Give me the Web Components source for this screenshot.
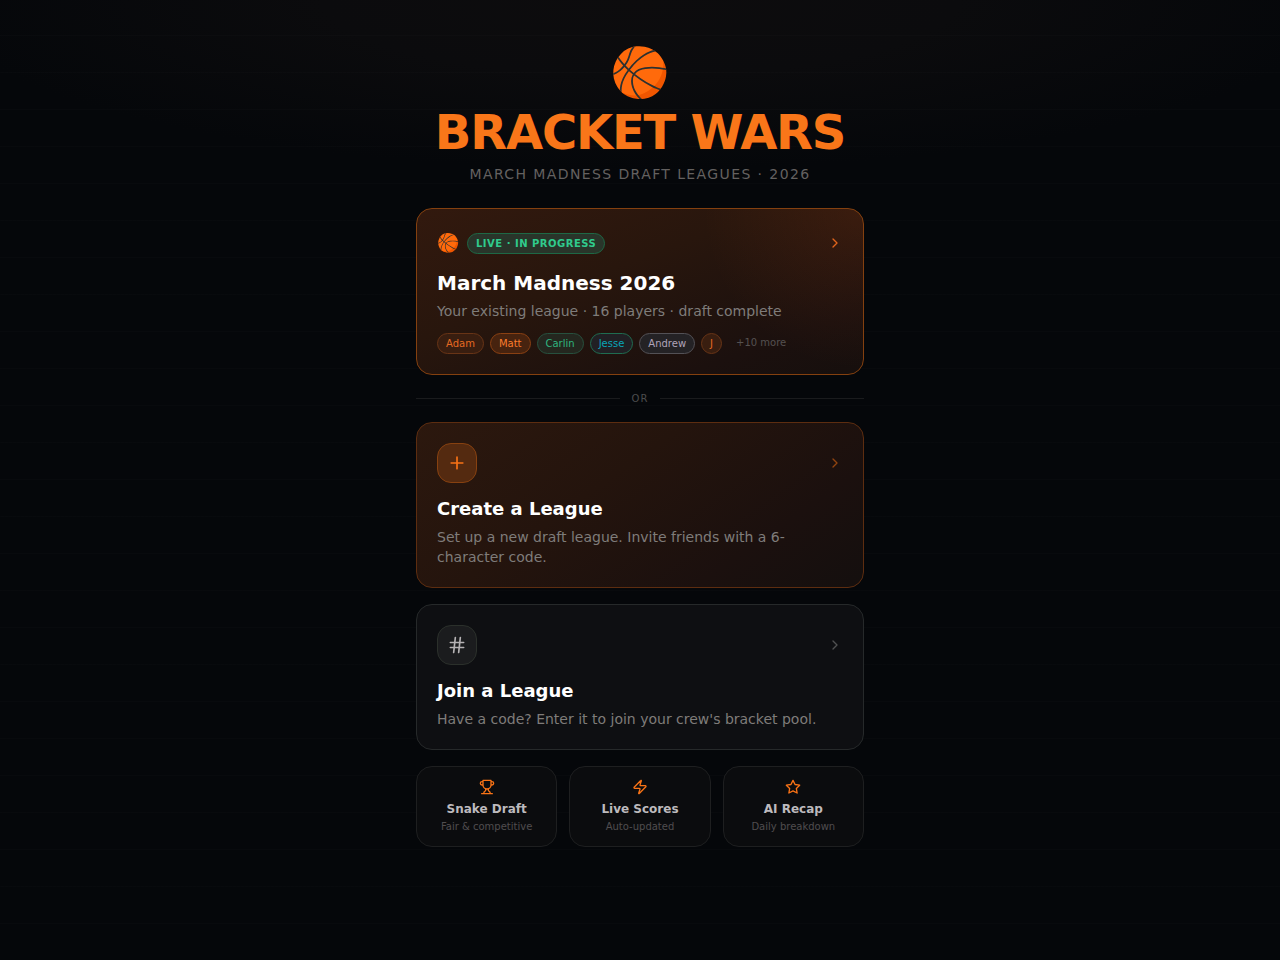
<!DOCTYPE html>
<html lang="en">
<head>
<meta charset="utf-8">
<meta name="viewport" content="width=device-width, initial-scale=1">
<title>Bracket Wars</title>
<style>
  body {
    margin: 0;
    background: #05070a;
    font-family: "DejaVu Sans", Verdana, sans-serif;
    color: #fff;
  }
</style>
</head>
<body>
<bracket-home></bracket-home>

<script>
const ICONS = {
  chevron: '<path d="m9 18 6-6-6-6"/>',
  plus: '<path d="M5 12h14M12 5v14"/>',
  hash: '<path d="M4 9h16M4 15h16M10 3 8 21M16 3l-2 18"/>',
  trophy: '<path d="M6 9H4.500a2.500 2.500 0 0 1 0-5H6M18 9h1.500a2.500 2.500 0 0 0 0-5H18M4 22h16M10 14.660V17c0 .55-.47.98-.97 1.210C7.850 18.750 7 20.240 7 22M14 14.660V17c0 .55.47.98.97 1.210C16.150 18.750 17 20.240 17 22M18 2H6v7a6 6 0 0 0 12 0V2Z"/>',
  zap: '<path d="M4 14a1 1 0 0 1-.78-1.630l9.900-10.200a.5.5 0 0 1 .86.46l-1.920 6.020A1 1 0 0 0 13 10h7a1 1 0 0 1 .78 1.630l-9.900 10.200a.5.5 0 0 1-.86-.46l1.920-6.020A1 1 0 0 0 11 14z"/>',
  star: '<path d="m12 2 3.090 6.260L22 9.270l-5 4.870 1.180 6.880L12 17.770l-6.180 3.250L7 14.140 2 9.270l6.910-1.010L12 2z"/>',
};

// <ui-icon name="zap"> - size comes from --icon-size
class UiIcon extends HTMLElement {
  connectedCallback() {
    if (!this.shadowRoot) this.attachShadow({ mode: 'open' });
    this.shadowRoot.innerHTML = `
      <style>
        :host { display: block; width: var(--icon-size, 16px); height: var(--icon-size, 16px); }
        svg { display: block; width: 100%; height: 100%; }
      </style>
      <svg viewBox="0 0 24 24" fill="none" stroke="currentColor" stroke-width="2"
        stroke-linecap="round" stroke-linejoin="round" aria-hidden="true">
        ${ICONS[this.getAttribute('name')] || ''}
      </svg>
    `;
  }
}

class PlayerChip extends HTMLElement {
  constructor() {
    super();
    this.attachShadow({ mode: 'open' });
    this.shadowRoot.innerHTML = `
      <style>
        :host {
          display: block;
          padding: 2px 8px;
          border: 1px solid #683416;
          border-radius: 999px;
          background: #391e10;
          color: #e56a22;
          font-size: 10px;
          line-height: 15px;
        }
        :host([tone="hot"]) { border-color: #8a4012; background: #47230f; color: #fb7c2c; }
        :host([tone="green"]) { border-color: #27503e; background: #24271f; color: #2fb57f; }
        :host([tone="cyan"]) { border-color: #1f6c50; background: #212024; color: #09a5b8; }
        :host([tone="violet"]) { border-color: #535156; background: #242225; color: #b0a2b9; }
        :host([tone="more"]) { border: 0; background: none; color: #555150; }
      </style>
      <slot></slot>
    `;
  }
}

class LiveBadge extends HTMLElement {
  constructor() {
    super();
    this.attachShadow({ mode: 'open' });
    this.shadowRoot.innerHTML = `
      <style>
        :host {
          display: block;
          padding: 2px 8px;
          border: 1px solid #1e6845;
          border-radius: 999px;
          background: #29352a;
          color: #30cb8d;
          font-size: 10px;
          font-weight: 700;
          line-height: 15px;
          letter-spacing: 0.05em;
        }
      </style>
      <slot></slot>
    `;
  }
}

class LeagueCard extends HTMLElement {
  constructor() {
    super();
    this.attachShadow({ mode: 'open' });
    this.shadowRoot.innerHTML = `
      <style>
        :host {
          --line: #26292a;
          --fill: #0e0f12;
          --arrow: #505152;
          --title-size: 18px;
          display: block;
        }
        :host([variant="live"]) {
          --line: #84400f;
          --fill: radial-gradient(circle at 100% 0, #ff60181a, transparent 160px),
            linear-gradient(160deg, #32190e 0%, #28160d 40%, #1b100e 80%, #160f0d 100%);
          --arrow: #e0641c;
          --title-size: 20px;
        }
        :host([variant="create"]) {
          --line: #5d2d10;
          --fill: linear-gradient(145deg, #2c180e 0%, #24140d 40%, #1b100e 75%, #140f0e 100%);
          --arrow: #91440f;
        }
        a {
          display: block;
          padding: 20px;
          border: 1px solid var(--line);
          border-radius: 16px;
          background: var(--fill) border-box;
          color: inherit;
          text-decoration: none;
        }
        .top {
          display: flex;
          align-items: center;
          justify-content: space-between;
          margin-bottom: 12px;
        }
        .lead { display: flex; align-items: center; gap: 8px; }
        ui-icon { color: var(--arrow); }
        h2 { margin: 0 0 4px; font-size: var(--title-size); line-height: 28px; }
        p { margin: 0; color: #7f7c7a; font-size: 14px; line-height: 20px; }
      </style>
      <a href="#">
        <div class="top">
          <div class="lead"><slot name="lead"></slot></div>
          <ui-icon name="chevron"></ui-icon>
        </div>
        <h2><slot name="title"></slot></h2>
        <p><slot></slot></p>
        <slot name="footer"></slot>
      </a>
    `;
  }

  connectedCallback() {
    this.shadowRoot.querySelector('a').href = this.getAttribute('href') || '#';
  }
}

class IconTile extends HTMLElement {
  connectedCallback() {
    if (!this.shadowRoot) this.attachShadow({ mode: 'open' });
    this.shadowRoot.innerHTML = `
      <style>
        :host {
          --icon-size: 20px;
          box-sizing: border-box;
          display: grid;
          place-items: center;
          width: 40px;
          height: 40px;
          border: 1px solid #2b302b;
          border-radius: 14px;
          background: #1b1c1e;
          color: #b5b2b4;
        }
        :host([tone="hot"]) { border-color: #874110; background: #542a10; color: #f97316; }
      </style>
      <ui-icon name="${this.getAttribute('icon')}"></ui-icon>
    `;
  }
}

class OrDivider extends HTMLElement {
  constructor() {
    super();
    this.attachShadow({ mode: 'open' });
    this.shadowRoot.innerHTML = `
      <style>
        :host {
          display: flex;
          align-items: center;
          gap: 12px;
          color: #4c4c4d;
          font-size: 10px;
          line-height: 15px;
          letter-spacing: 0.1em;
        }
        :host::before, :host::after {
          content: "";
          flex: 1;
          height: 1px;
          background: #1a1b1d;
        }
      </style>
      <slot></slot>
    `;
  }
}

class FeatureTile extends HTMLElement {
  connectedCallback() {
    if (!this.shadowRoot) this.attachShadow({ mode: 'open' });
    this.shadowRoot.innerHTML = `
      <style>
        :host {
          display: flex;
          flex-direction: column;
          align-items: center;
          padding: 12px;
          border: 1px solid #1e1f20;
          border-radius: 16px;
          background: #0b0c0e;
          text-align: center;
        }
        ui-icon { margin-bottom: 6px; color: #f97316; }
        h3 { margin: 0 0 2px; color: #bdbabd; font-size: 12px; line-height: 16px; }
        p { margin: 0; color: #504d4f; font-size: 10px; line-height: 15px; }
      </style>
      <ui-icon name="${this.getAttribute('icon')}"></ui-icon>
      <h3>${this.getAttribute('label')}</h3>
      <p><slot></slot></p>
    `;
  }
}

class BracketHome extends HTMLElement {
  constructor() {
    super();
    this.attachShadow({ mode: 'open' });
    this.shadowRoot.innerHTML = `
      <style>
        :host {
          box-sizing: border-box;
          display: block;
          min-height: 100vh;
          padding: 48px 16px;
          /* faint court lines over a warm glow from the top */
          background:
            repeating-linear-gradient(0deg, transparent 0 36px, #ffffff03 36px 37px),
            radial-gradient(ellipse 55% 170px at 50% 0, #0d0c0d, #0b0b0d 45%, transparent);
        }
        main { max-width: 448px; margin: 0 auto; }
        header { margin-bottom: 24px; text-align: center; }
        .ball { margin-bottom: 12px; font-size: 48px; line-height: 48px; }
        h1 {
          margin: 0 0 8px;
          color: #f97619;
          font-size: 48px;
          line-height: 48px;
          letter-spacing: -0.025em;
        }
        .tagline {
          margin: 0;
          color: #646160;
          font-size: 14px;
          line-height: 20px;
          letter-spacing: 0.1em;
        }
        or-divider { margin: 16px 0; }
        league-card { margin-bottom: 16px; }
        .mini { font-size: 18px; line-height: 28px; }
        .ball, .mini { filter: hue-rotate(6deg) saturate(1.3); }
        .players { display: flex; flex-wrap: wrap; gap: 6px; margin-top: 12px; }
        .features { display: grid; grid-template-columns: repeat(3, 1fr); gap: 12px; }
      </style>
      <main>
        <header>
          <div class="ball">🏀</div>
          <h1>BRACKET WARS</h1>
          <p class="tagline">MARCH MADNESS DRAFT LEAGUES · 2026</p>
        </header>

        <league-card variant="live" href="#league">
          <span slot="lead" class="mini">🏀</span>
          <live-badge slot="lead">LIVE · IN PROGRESS</live-badge>
          <span slot="title">March Madness 2026</span>
          Your existing league · 16 players · draft complete
          <div slot="footer" class="players">
            <player-chip>Adam</player-chip>
            <player-chip tone="hot">Matt</player-chip>
            <player-chip tone="green">Carlin</player-chip>
            <player-chip tone="cyan">Jesse</player-chip>
            <player-chip tone="violet">Andrew</player-chip>
            <player-chip>J</player-chip>
            <player-chip tone="more">+10 more</player-chip>
          </div>
        </league-card>

        <or-divider>OR</or-divider>

        <league-card variant="create" href="#create">
          <icon-tile slot="lead" icon="plus" tone="hot"></icon-tile>
          <span slot="title">Create a League</span>
          Set up a new draft league. Invite friends with a 6-character code.
        </league-card>

        <league-card href="#join">
          <icon-tile slot="lead" icon="hash"></icon-tile>
          <span slot="title">Join a League</span>
          Have a code? Enter it to join your crew's bracket pool.
        </league-card>

        <section class="features">
          <feature-tile icon="trophy" label="Snake Draft">Fair &amp; competitive</feature-tile>
          <feature-tile icon="zap" label="Live Scores">Auto-updated</feature-tile>
          <feature-tile icon="star" label="AI Recap">Daily breakdown</feature-tile>
        </section>
      </main>
    `;
  }
}

customElements.define('ui-icon', UiIcon);
customElements.define('player-chip', PlayerChip);
customElements.define('live-badge', LiveBadge);
customElements.define('icon-tile', IconTile);
customElements.define('league-card', LeagueCard);
customElements.define('or-divider', OrDivider);
customElements.define('feature-tile', FeatureTile);
customElements.define('bracket-home', BracketHome);
</script>
</body>
</html>
